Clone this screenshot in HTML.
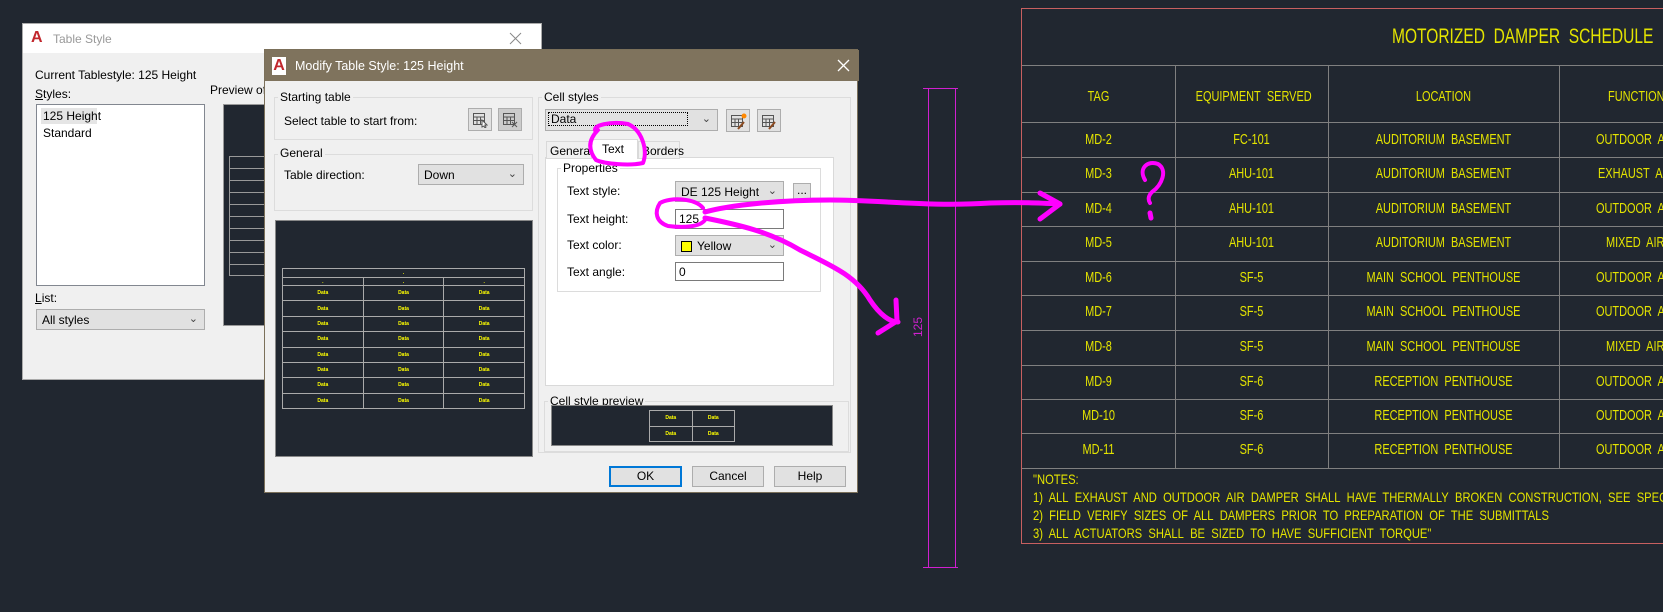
<!DOCTYPE html>
<html><head><meta charset="utf-8"><style>
*{box-sizing:border-box;margin:0;padding:0}
body{width:1663px;height:612px;background:#212730;position:relative;overflow:hidden;font-family:"Liberation Sans",sans-serif;font-size:12px;color:#000}
#clip{position:absolute;left:0;top:0;width:1663px;height:612px;overflow:hidden}
.a{position:absolute}
.grp{position:absolute;border:1px solid #dcdcdc}
.lbl{position:absolute;background:#f0f0f0;padding:0 2px;}
.combo{position:absolute;background:#e1e1e1;border:1px solid #adadad;padding:3px 5px;}
.combo .v{position:absolute;right:6px;top:2px;font-size:11px;color:#444}
.inp{position:absolute;background:#fff;border:1px solid #7a7a7a;padding:2px 3px}
.btn{position:absolute;background:#e1e1e1;border:1px solid #adadad;text-align:center;line-height:18px}
.ib{position:absolute;background:#e1e1e1;border:1px solid #adadad}
.ib svg{position:absolute;left:3px;top:3px}
.dk{position:absolute;background:#212730;border:1px solid #888}
table.pv{position:absolute;border-collapse:collapse}
table.pv td{border:1px solid #aaa;color:#ff0;font-size:5px;text-align:center;font-weight:bold}
.cad{position:absolute;color:#e4e400;font-family:"Liberation Sans Narrow","Liberation Sans",sans-serif;font-stretch:condensed;white-space:nowrap}
.row{position:absolute;left:1022px;width:640px;height:35px}
.row span{position:absolute;top:0;line-height:34px;font-size:15px;transform:scaleX(.73);transform-origin:center}
</style></head><body><div id="clip">

<!-- Table Style dialog -->
<div class="a" style="left:22px;top:23px;width:520px;height:357px;background:#f0f0f0;border:1px solid #aaa">
  <div class="a" style="left:0;top:0;width:518px;height:29px;background:#fff"></div>
  <div class="a" style="left:8px;top:6px;width:14px;height:16px;color:#c1272d;font-weight:bold;font-size:16px;line-height:16px">A</div>
  <div class="a" style="left:30px;top:8px;color:#999;font-size:12px">Table Style</div>
  <svg class="a" style="left:486px;top:8px" width="13" height="13"><path d="M1 1L12 12M12 1L1 12" stroke="#888" stroke-width="1"/></svg>
  <div class="a" style="left:12px;top:44px">Current Tablestyle: 125 Height</div>
  <div class="a" style="left:12px;top:63px"><u>S</u>tyles:</div>
  <div class="a" style="left:13px;top:80px;width:169px;height:182px;background:#fff;border:1px solid #828790"></div>
  <div class="a" style="left:18px;top:84px;width:56px;height:16px;background:#e5e5e5"></div>
  <div class="a" style="left:20px;top:85px">125 Height</div>
  <div class="a" style="left:20px;top:102px">Standard</div>
  <div class="a" style="left:12px;top:267px"><u>L</u>ist:</div>
  <div class="combo" style="left:13px;top:285px;width:169px;height:21px">All styles<span class="v">⌄</span></div>
  <div class="a" style="left:187px;top:59px">Preview of:</div>
  <div class="a" style="left:200px;top:80px;width:60px;height:222px;background:#212730;border:1px solid #999"></div>
  <div class="a" style="left:206px;top:132px;width:60px;height:120px;border:1px solid #999;background:repeating-linear-gradient(#212730 0 11px,#999 11px 12px)"></div>
</div>

<!-- Modify dialog -->
<div class="a" style="left:264px;top:49px;width:594px;height:444px;background:#f0f0f0;border:1px solid #7b705a">
  <div class="a" style="left:0;top:0;width:594px;height:31px;background:#7f735d"></div>
  <div class="a" style="left:7px;top:7px;width:14px;height:18px;background:#fff;color:#c1272d;font-weight:bold;font-size:16px;line-height:18px;text-align:center">A</div>
  <div class="a" style="left:30px;top:9px;color:#fff;font-size:12.5px">Modify Table Style: 125 Height</div>
  <svg class="a" style="left:572px;top:9px" width="13" height="13"><path d="M1 1L12 12M12 1L1 12" stroke="#fff" stroke-width="1.3"/></svg>

  <div class="grp" style="left:9px;top:47px;width:259px;height:43px"></div>
  <div class="lbl" style="left:13px;top:40px">Starting table</div>
  <div class="a" style="left:19px;top:64px">Select table to start from:</div>
  <div class="ib" style="left:203px;top:58px;width:24px;height:23px"><svg width="16" height="16" viewBox="0 0 16 16" fill="none" stroke="#555"><rect x="1.5" y="1.5" width="11" height="11"/><path d="M1.5 5h11M1.5 8.5h11M5 5v7.5M8.5 5v7.5"/><path d="M10 8l5 5-2 0 1 2-1 1-1-2-2 1z" fill="#fff"/></svg></div>
  <div class="ib" style="left:233px;top:58px;width:24px;height:23px;background:#ccc"><svg width="16" height="16" viewBox="0 0 16 16" fill="none" stroke="#555"><rect x="1.5" y="1.5" width="11" height="11"/><path d="M1.5 5h11M1.5 8.5h11M5 5v7.5M8.5 5v7.5M10 10l5 5M15 10l-5 5"/></svg></div>

  <div class="grp" style="left:9px;top:104px;width:259px;height:57px"></div>
  <div class="lbl" style="left:13px;top:96px">General</div>
  <div class="a" style="left:19px;top:118px">Table direction:</div>
  <div class="combo" style="left:153px;top:114px;width:106px;height:21px">Down<span class="v">⌄</span></div>

  <div class="dk" style="left:10px;top:170px;width:258px;height:237px"></div>
  <table class="pv" style="left:17px;top:218px;width:243px;height:141px">
    <tr><td colspan="3" style="height:9px">.</td></tr>
    <tr><td style="height:8px">.</td><td>.</td><td>.</td></tr>
    <tr><td>Data</td><td>Data</td><td>Data</td></tr><tr><td>Data</td><td>Data</td><td>Data</td></tr>
    <tr><td>Data</td><td>Data</td><td>Data</td></tr><tr><td>Data</td><td>Data</td><td>Data</td></tr>
    <tr><td>Data</td><td>Data</td><td>Data</td></tr><tr><td>Data</td><td>Data</td><td>Data</td></tr>
    <tr><td>Data</td><td>Data</td><td>Data</td></tr><tr><td>Data</td><td>Data</td><td>Data</td></tr>
  </table>

  <div class="grp" style="left:273px;top:47px;width:313px;height:356px"></div>
  <div class="lbl" style="left:277px;top:40px">Cell styles</div>
  <div class="combo" style="left:280px;top:59px;width:173px;height:22px"><span style="border:1px dotted #000;display:block;width:140px;height:14px;margin:-1px -3px;padding-left:2px;line-height:12px">Data</span><span class="v">⌄</span></div>
  <div class="ib" style="left:461px;top:59px;width:24px;height:23px"><svg width="18" height="17" viewBox="0 0 18 17" fill="none" stroke="#555"><rect x="1.5" y="2.5" width="11" height="11"/><path d="M1.5 6h11M1.5 9.5h11M5 6v7.5M8.5 6v7.5"/><path d="M8 16l6-7" stroke="#8b4a20" stroke-width="2"/><circle cx="14" cy="3" r="2" fill="#f80" stroke="#f80"/></svg></div>
  <div class="ib" style="left:492px;top:59px;width:24px;height:23px"><svg width="18" height="17" viewBox="0 0 18 17" fill="none" stroke="#555"><rect x="1.5" y="2.5" width="11" height="11"/><path d="M1.5 6h11M1.5 9.5h11M5 6v7.5M8.5 6v7.5"/><path d="M8 16l6-7" stroke="#8b4a20" stroke-width="2"/></svg></div>

  <div class="a" style="left:280px;top:107px;width:289px;height:229px;background:#fff;border:1px solid #d9d9d9"></div>
  <div class="a" style="left:281px;top:91px;width:46px;height:18px;background:#f0f0f0;border:1px solid #d9d9d9;padding:2px 3px">General</div>
  <div class="a" style="left:373px;top:91px;width:42px;height:18px;background:#f0f0f0;border:1px solid #d9d9d9;padding:2px 0 0 3px">Borders</div>
  <div class="a" style="left:326px;top:89px;width:47px;height:20px;background:#fff;border:1px solid #d9d9d9;border-bottom:none;padding:2px 0 0 10px">Text</div>
  <div class="grp" style="left:292px;top:118px;width:264px;height:124px"></div>
  <div class="lbl" style="left:296px;top:111px;background:#fff">Properties</div>
  <div class="a" style="left:302px;top:134px">Text style:</div>
  <div class="combo" style="left:410px;top:131px;width:109px;height:21px">DE 125 Height<span class="v">⌄</span></div>
  <div class="btn" style="left:528px;top:133px;width:18px;height:17px;line-height:12px">...</div>
  <div class="a" style="left:302px;top:162px">Text height:</div>
  <div class="inp" style="left:410px;top:159px;width:109px;height:20px">125</div>
  <div class="a" style="left:302px;top:188px">Text color:</div>
  <div class="combo" style="left:410px;top:185px;width:109px;height:21px;padding-left:5px"><span style="display:inline-block;width:11px;height:11px;background:#ff0;border:1px solid #000;vertical-align:-2px;margin-right:5px"></span>Yellow<span class="v">⌄</span></div>
  <div class="a" style="left:302px;top:215px">Text angle:</div>
  <div class="inp" style="left:410px;top:212px;width:109px;height:19px">0</div>

  <div class="grp" style="left:279px;top:351px;width:305px;height:51px"></div>
  <div class="lbl" style="left:283px;top:344px">Cell style preview</div>
  <div class="dk" style="left:286px;top:355px;width:282px;height:41px"></div>
  <table class="pv" style="left:384px;top:360px;width:86px;height:32px"><tr><td>Data</td><td>Data</td></tr><tr><td>Data</td><td>Data</td></tr></table>

  <div class="btn" style="left:344px;top:416px;width:73px;height:21px;border:2px solid #0078d7;line-height:17px">OK</div>
  <div class="btn" style="left:427px;top:416px;width:72px;height:21px">Cancel</div>
  <div class="btn" style="left:509px;top:416px;width:72px;height:21px">Help</div>
</div>

<!-- dimension -->
<div class="a" style="left:923px;top:88px;width:35px;height:1px;background:#d020d0"></div>
<div class="a" style="left:923px;top:567px;width:35px;height:1px;background:#d020d0"></div>
<div class="a" style="left:928px;top:88px;width:1px;height:479px;background:#d020d0"></div>
<div class="a" style="left:955px;top:88px;width:1px;height:479px;background:#d020d0"></div>
<div class="a" style="left:908px;top:320px;color:#d020d0;font-size:12px;transform:rotate(-90deg)">125</div>

<!-- CAD table -->
<div class="a" style="left:1021px;top:8px;width:700px;height:536px;border:1px solid #c86060"></div>
<div class="a" style="left:1022px;top:65px;width:641px;height:1px;background:#808080"></div>
<div class="a" style="left:1175px;top:65px;width:1px;height:403px;background:#808080"></div>
<div class="a" style="left:1328px;top:65px;width:1px;height:403px;background:#808080"></div>
<div class="a" style="left:1559px;top:65px;width:1px;height:403px;background:#808080"></div>
<div class="cad" style="left:1392px;top:25px;font-size:21px;transform:scaleX(.74);transform-origin:left">MOTORIZED&nbsp; DAMPER&nbsp; SCHEDULE</div>

<div class="cad" style="left:1033px;top:470px;font-size:14px;line-height:18px;transform:scaleX(.8);transform-origin:left">"NOTES:<br>1)&nbsp; ALL&nbsp; EXHAUST&nbsp; AND&nbsp; OUTDOOR&nbsp; AIR&nbsp; DAMPER&nbsp; SHALL&nbsp; HAVE&nbsp; THERMALLY&nbsp; BROKEN&nbsp; CONSTRUCTION,&nbsp; SEE&nbsp; SPECIFICATIONS<br>2)&nbsp; FIELD&nbsp; VERIFY&nbsp; SIZES&nbsp; OF&nbsp; ALL&nbsp; DAMPERS&nbsp; PRIOR&nbsp; TO&nbsp; PREPARATION&nbsp; OF&nbsp; THE&nbsp; SUBMITTALS<br>3)&nbsp; ALL&nbsp; ACTUATORS&nbsp; SHALL&nbsp; BE&nbsp; SIZED&nbsp; TO&nbsp; HAVE&nbsp; SUFFICIENT&nbsp; TORQUE"</div>

<div class="cad row" style="top:72px;height:50px"><span style="left:0;width:153px;text-align:center;line-height:50px">TAG</span><span style="left:153px;width:153px;text-align:center;line-height:50px">EQUIPMENT&nbsp; SERVED</span><span style="left:306px;width:231px;text-align:center;line-height:50px">LOCATION</span><span style="left:586px;line-height:50px;transform-origin:left">FUNCTION</span></div>

<div class="a" style="left:1022px;top:122px;width:641px;height:1px;background:#808080"></div>
<div class="row cad" style="top:123px"><span style="left:0;width:153px;text-align:center">MD-2</span><span style="left:153px;width:153px;text-align:center">FC-101</span><span style="left:306px;width:231px;text-align:center">AUDITORIUM&nbsp; BASEMENT</span><span style="left:574px;transform-origin:left">OUTDOOR&nbsp; AIR</span></div>
<div class="a" style="left:1022px;top:157px;width:641px;height:1px;background:#808080"></div>
<div class="row cad" style="top:157px"><span style="left:0;width:153px;text-align:center">MD-3</span><span style="left:153px;width:153px;text-align:center">AHU-101</span><span style="left:306px;width:231px;text-align:center">AUDITORIUM&nbsp; BASEMENT</span><span style="left:576px;transform-origin:left">EXHAUST&nbsp; AIR</span></div>
<div class="a" style="left:1022px;top:192px;width:641px;height:1px;background:#808080"></div>
<div class="row cad" style="top:192px"><span style="left:0;width:153px;text-align:center">MD-4</span><span style="left:153px;width:153px;text-align:center">AHU-101</span><span style="left:306px;width:231px;text-align:center">AUDITORIUM&nbsp; BASEMENT</span><span style="left:574px;transform-origin:left">OUTDOOR&nbsp; AIR</span></div>
<div class="a" style="left:1022px;top:226px;width:641px;height:1px;background:#808080"></div>
<div class="row cad" style="top:226px"><span style="left:0;width:153px;text-align:center">MD-5</span><span style="left:153px;width:153px;text-align:center">AHU-101</span><span style="left:306px;width:231px;text-align:center">AUDITORIUM&nbsp; BASEMENT</span><span style="left:584px;transform-origin:left">MIXED&nbsp; AIR</span></div>
<div class="a" style="left:1022px;top:261px;width:641px;height:1px;background:#808080"></div>
<div class="row cad" style="top:261px"><span style="left:0;width:153px;text-align:center">MD-6</span><span style="left:153px;width:153px;text-align:center">SF-5</span><span style="left:306px;width:231px;text-align:center">MAIN&nbsp; SCHOOL&nbsp; PENTHOUSE</span><span style="left:574px;transform-origin:left">OUTDOOR&nbsp; AIR</span></div>
<div class="a" style="left:1022px;top:295px;width:641px;height:1px;background:#808080"></div>
<div class="row cad" style="top:295px"><span style="left:0;width:153px;text-align:center">MD-7</span><span style="left:153px;width:153px;text-align:center">SF-5</span><span style="left:306px;width:231px;text-align:center">MAIN&nbsp; SCHOOL&nbsp; PENTHOUSE</span><span style="left:574px;transform-origin:left">OUTDOOR&nbsp; AIR</span></div>
<div class="a" style="left:1022px;top:330px;width:641px;height:1px;background:#808080"></div>
<div class="row cad" style="top:330px"><span style="left:0;width:153px;text-align:center">MD-8</span><span style="left:153px;width:153px;text-align:center">SF-5</span><span style="left:306px;width:231px;text-align:center">MAIN&nbsp; SCHOOL&nbsp; PENTHOUSE</span><span style="left:584px;transform-origin:left">MIXED&nbsp; AIR</span></div>
<div class="a" style="left:1022px;top:365px;width:641px;height:1px;background:#808080"></div>
<div class="row cad" style="top:365px"><span style="left:0;width:153px;text-align:center">MD-9</span><span style="left:153px;width:153px;text-align:center">SF-6</span><span style="left:306px;width:231px;text-align:center">RECEPTION&nbsp; PENTHOUSE</span><span style="left:574px;transform-origin:left">OUTDOOR&nbsp; AIR</span></div>
<div class="a" style="left:1022px;top:399px;width:641px;height:1px;background:#808080"></div>
<div class="row cad" style="top:399px"><span style="left:0;width:153px;text-align:center">MD-10</span><span style="left:153px;width:153px;text-align:center">SF-6</span><span style="left:306px;width:231px;text-align:center">RECEPTION&nbsp; PENTHOUSE</span><span style="left:574px;transform-origin:left">OUTDOOR&nbsp; AIR</span></div>
<div class="a" style="left:1022px;top:433px;width:641px;height:1px;background:#808080"></div>
<div class="row cad" style="top:433px"><span style="left:0;width:153px;text-align:center">MD-11</span><span style="left:153px;width:153px;text-align:center">SF-6</span><span style="left:306px;width:231px;text-align:center">RECEPTION&nbsp; PENTHOUSE</span><span style="left:574px;transform-origin:left">OUTDOOR&nbsp; AIR</span></div>
<div class="a" style="left:1022px;top:468px;width:641px;height:1px;background:#808080"></div>

<!-- magenta annotations -->
<svg class="a" style="left:0;top:0" width="1663" height="612" fill="none" stroke="#ff00ff" stroke-linecap="round" stroke-linejoin="round">
  <path d="M596 132 C590 125 612 121 628 124 C642 130 648 150 643 163 C630 166 605 164 596 160 C588 150 588 140 598 130" stroke-width="4"/>
  <path d="M703 208 C695 198 670 197 660 203 C654 212 656 222 668 226 C683 228 700 227 705 220" stroke-width="4"/>
  <path d="M705 212 C730 205 780 200 830 200 C880 200 930 207 990 203 C1020 202 1040 203 1060 204" stroke-width="5"/>
  <path d="M1040 193 L1060 204 L1040 219" stroke-width="5"/>
  <path d="M705 218 C740 225 770 232 800 250 C830 265 855 275 870 300 C880 315 890 322 898 322" stroke-width="5"/>
  <path d="M878 333 L897 321 L896 300" stroke-width="5"/>
  <path d="M1145 180 C1138 168 1148 160 1158 164 C1168 170 1162 185 1152 192 C1148 196 1148 200 1150 203" stroke-width="4"/>
  <path d="M1150 213 L1151 218" stroke-width="5"/>
</svg>
</div></body></html>
